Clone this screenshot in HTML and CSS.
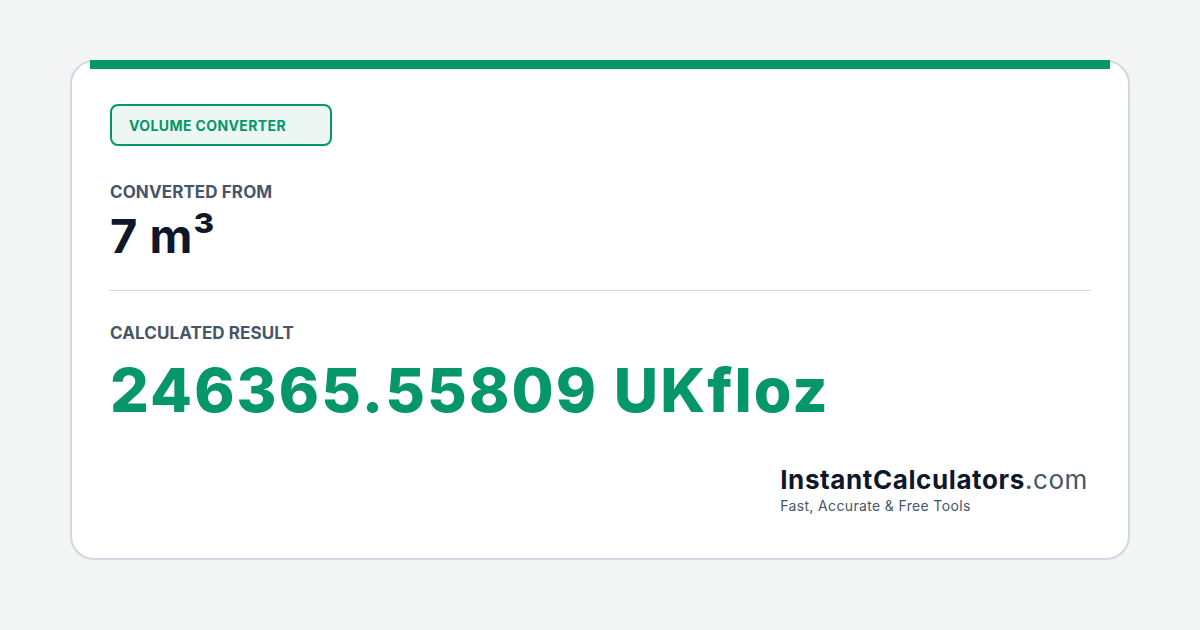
FILE: index.html
```html
<!DOCTYPE html>
<html lang="en">
<head>
    <meta charset="UTF-8">
    <meta name="viewport" content="width=device-width, initial-scale=1.0">
    <title>Volume Converter - 7 m³ to UKfloz</title>
    <link rel="stylesheet" href="styles.css">
</head>
<body>
    <div class="card">
        <div class="accent-bar"></div>

        <div class="badge">VOLUME CONVERTER</div>

        <div class="label from-label">CONVERTED FROM</div>
        <div class="from-value">7 m³</div>

        <div class="divider"></div>

        <div class="label">CALCULATED RESULT</div>
        <div class="result-value">246365.55809 UKfloz</div>

        <div class="footer">
            <div class="brand">
                <div class="brand-name">InstantCalculators<span class="brand-tld">.com</span></div>
                <div class="brand-tagline">Fast, Accurate &amp; Free Tools</div>
            </div>
        </div>
    </div>
</body>
</html>
```

FILE: styles.css
```css
body {
    margin: 0;
    padding: 60px 70px;
    font-family: 'Inter', 'Liberation Sans', sans-serif;
    background-color: #f3f5f4;
}

.card {
    box-sizing: border-box;
    width: 1060px;
    height: 500px;
    background-color: #ffffff;
    border: 2px solid #cfd8e3;
    border-radius: 24px;
    padding: 0 38px;
    display: flex;
    flex-direction: column;
    align-items: flex-start;
}

.accent-bar {
    align-self: stretch;
    height: 9px;
    margin: -2px -20px 0;
    background-color: #059669;
}

.badge {
    box-sizing: border-box;
    width: 222px;
    height: 42px;
    margin-top: 35px;
    padding: 0 17px;
    display: flex;
    align-items: center;
    border: 2px solid #059669;
    border-radius: 8px;
    background-color: #ecf6f2;
    color: #059669;
    font-size: 14px;
    font-weight: 700;
    letter-spacing: 0.4px;
}

.label {
    color: #475569;
    font-size: 17px;
    font-weight: 700;
    line-height: 20px;
    letter-spacing: 0.1px;
}

.from-label {
    margin-top: 36px;
}

.from-value {
    margin-top: 6px;
    color: #0f172a;
    font-size: 47px;
    font-weight: 700;
    line-height: 56px;
    letter-spacing: 0.5px;
}

.divider {
    align-self: stretch;
    height: 1px;
    margin: 26px 0 32px;
    background-color: #cdd8e2;
}

.result-value {
    margin-top: 12px;
    color: #059669;
    font-size: 61px;
    font-weight: 800;
    line-height: 70px;
    letter-spacing: 2.1px;
}

.footer {
    align-self: stretch;
    display: flex;
    justify-content: flex-end;
    margin-top: 40px;
}

.brand {
    margin-right: 2px;
}

.brand-name {
    color: #0f172a;
    font-size: 26px;
    font-weight: 700;
    line-height: 30px;
    letter-spacing: 0.6px;
}

.brand-tld {
    color: #475569;
    font-weight: 400;
}

.brand-tagline {
    margin-top: 2px;
    color: #475569;
    font-size: 14px;
    line-height: 18px;
    letter-spacing: 0.35px;
}
```
